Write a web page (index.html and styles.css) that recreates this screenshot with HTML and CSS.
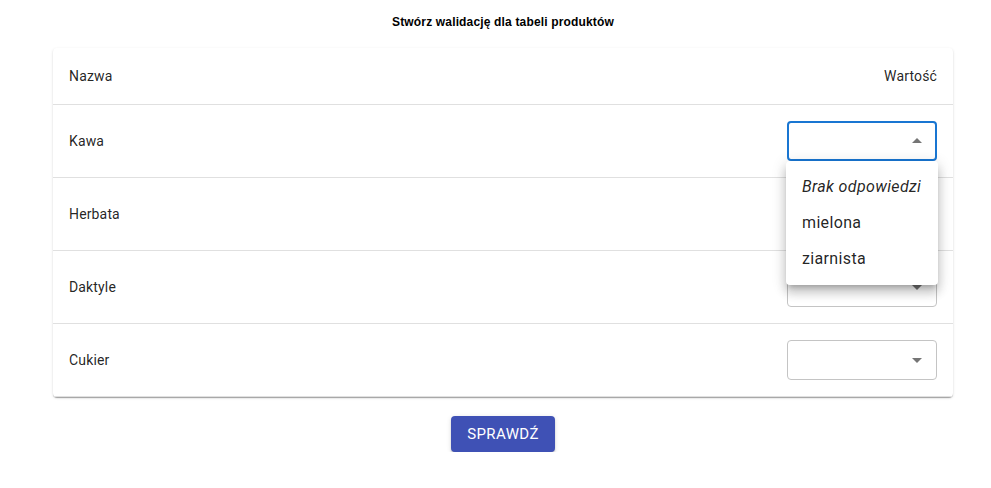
FILE: index.html
```html
<!DOCTYPE html>
<html lang="pl">
<head>
<meta charset="utf-8">
<link rel="stylesheet" href="styles.css">
</head>
<body>
<div class="page">
  <div class="title">Stwórz walidację dla tabeli produktów</div>
  <div class="paper">
    <div class="row head">
      <span>Nazwa</span>
      <span>Wartość</span>
    </div>
    <div class="row">
      <span>Kawa</span>
      <div class="select focused">
        <svg class="arrow" viewBox="0 0 24 24"><path d="M7 14l5-5 5 5z"/></svg>
      </div>
    </div>
    <div class="row">
      <span>Herbata</span>
      <div class="select">
        <svg class="arrow" viewBox="0 0 24 24"><path d="M7 10l5 5 5-5z"/></svg>
      </div>
    </div>
    <div class="row">
      <span>Daktyle</span>
      <div class="select">
        <svg class="arrow" viewBox="0 0 24 24"><path d="M7 10l5 5 5-5z"/></svg>
      </div>
    </div>
    <div class="row">
      <span>Cukier</span>
      <div class="select">
        <svg class="arrow" viewBox="0 0 24 24"><path d="M7 10l5 5 5-5z"/></svg>
      </div>
    </div>
  </div>
  <div class="actions">
    <button class="btn">Sprawdź</button>
  </div>
</div>
<ul class="menu">
  <li class="empty">Brak odpowiedzi</li>
  <li>mielona</li>
  <li>ziarnista</li>
</ul>
</body>
</html>
```
FILE: styles.css
```css
html, body {
  margin: 0;
  padding: 0;
  background: #fff;
}
body {
  font-family: Roboto, "Liberation Sans", sans-serif;
  color: rgba(0, 0, 0, 0.87);
}
.page {
  width: 900px;
  padding-left: 53px;
}
.title {
  font-family: "Liberation Sans", Arial, sans-serif;
  font-weight: bold;
  font-size: 12px;
  line-height: 16px;
  letter-spacing: 0.16px;
  text-align: center;
  padding-top: 14px;
  margin-bottom: 18px;
  color: #000;
}
.paper {
  background: #fff;
  border-radius: 4px;
  box-shadow: 0 2px 1px -1px rgba(0,0,0,0.2), 0 1px 1px 0 rgba(0,0,0,0.14), 0 1px 3px 0 rgba(0,0,0,0.12);
}
.row {
  display: flex;
  justify-content: space-between;
  align-items: center;
  padding: 16px;
  border-bottom: 1px solid rgba(224, 224, 224, 1);
  font-size: 14px;
  line-height: 24px;
  letter-spacing: 0.01071em;
}
.select {
  position: relative;
  box-sizing: border-box;
  width: 150px;
  height: 40px;
  border: 1px solid #c4c4c4;
  border-radius: 4px;
}
.select.focused {
  border: 2px solid #1976d2;
}
.arrow {
  position: absolute;
  right: 7px;
  top: 50%;
  margin-top: -12px;
  width: 24px;
  height: 24px;
  fill: rgba(0, 0, 0, 0.54);
}
.select.focused .arrow {
  right: 6px;
}
.actions {
  display: flex;
  justify-content: center;
  padding-top: 19px;
}
.btn {
  font-family: Roboto, sans-serif;
  font-weight: 400;
  font-size: 15px;
  line-height: 24px;
  letter-spacing: 0.4px;
  text-transform: uppercase;
  color: #fff;
  background: #3f51b5;
  border: none;
  border-radius: 4px;
  padding: 6px 16px;
  box-shadow: 0 3px 1px -2px rgba(0,0,0,0.2), 0 2px 2px 0 rgba(0,0,0,0.14), 0 1px 5px 0 rgba(0,0,0,0.12);
}
.menu {
  position: absolute;
  left: 786px;
  top: 161px;
  width: 152px;
  margin: 0;
  padding: 8px 0;
  list-style: none;
  background: #fff;
  border-radius: 4px;
  box-shadow: 0 5px 5px -3px rgba(0,0,0,0.2), 0 8px 10px 1px rgba(0,0,0,0.14), 0 3px 14px 2px rgba(0,0,0,0.12);
}
.menu li {
  padding: 6px 16px;
  font-size: 16px;
  line-height: 24px;
  letter-spacing: 0.35px;
}
.menu li.empty {
  font-style: italic;
}
```
